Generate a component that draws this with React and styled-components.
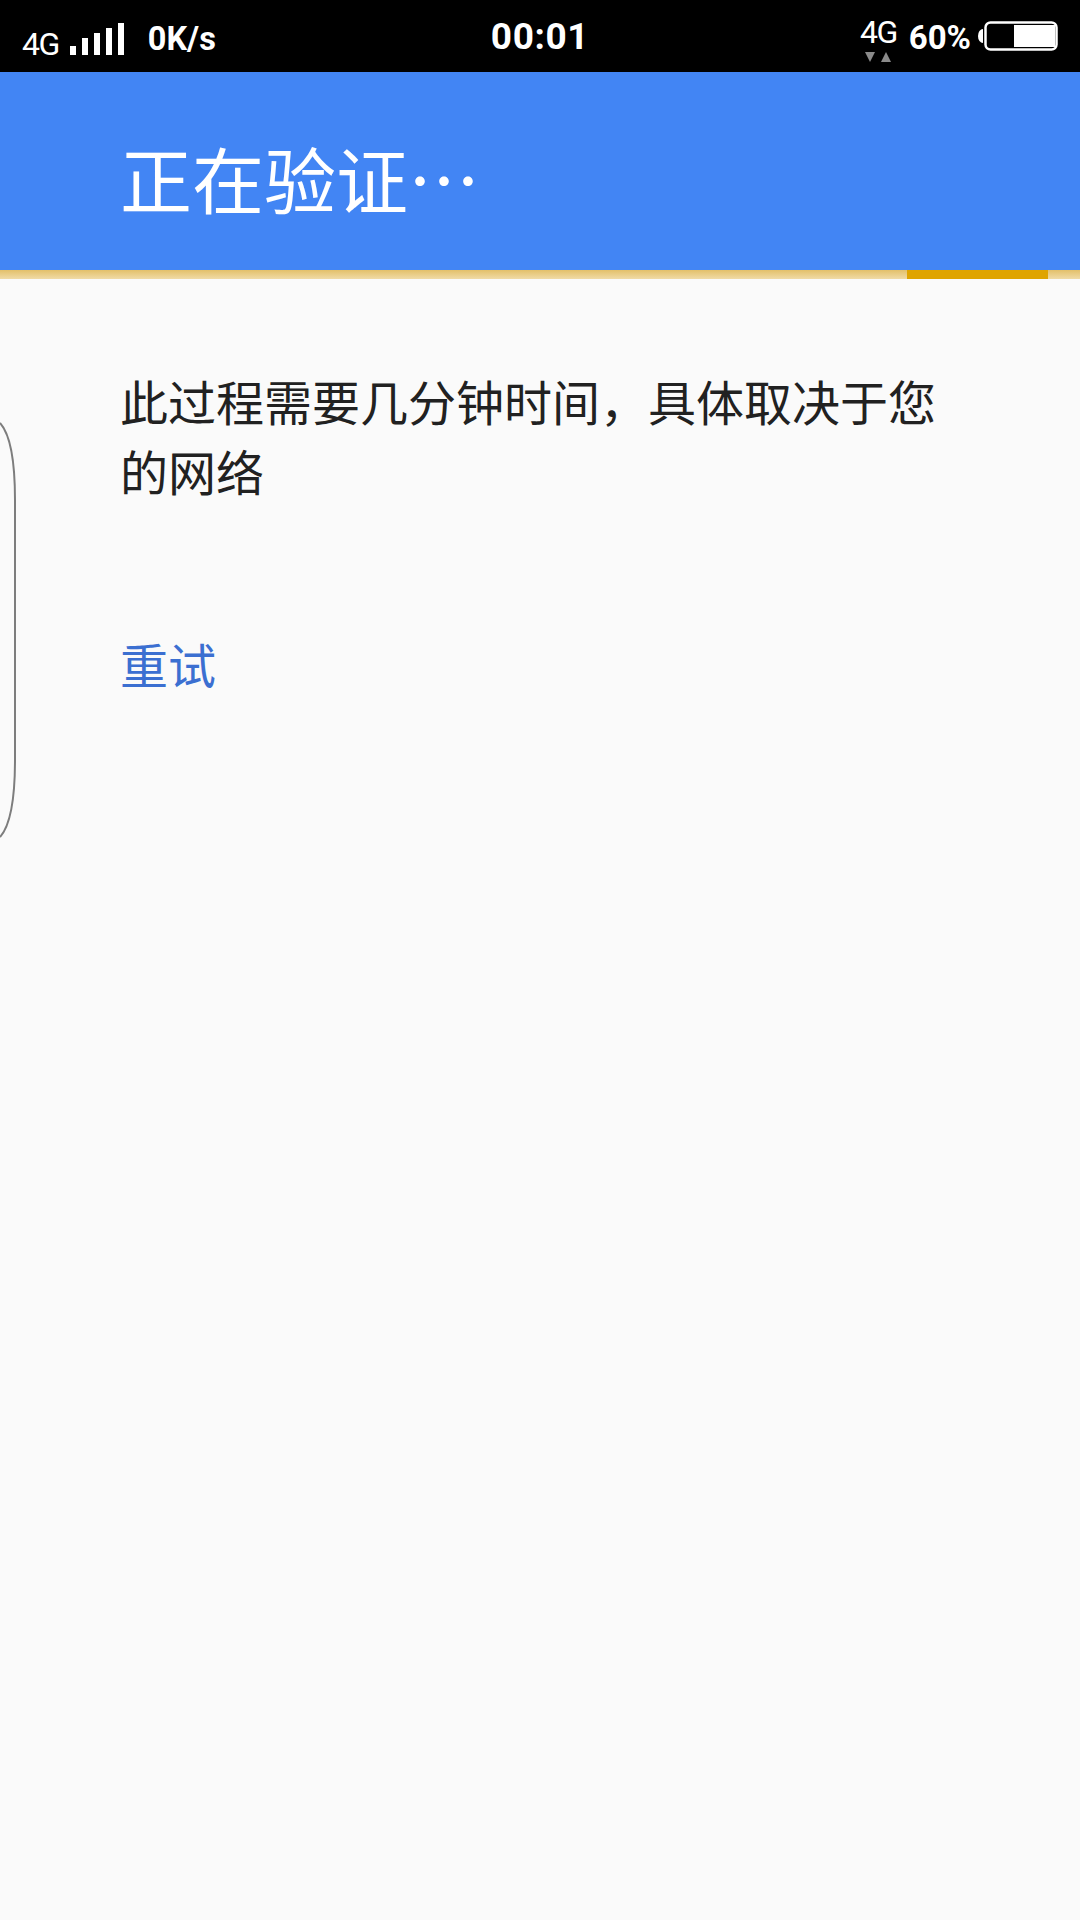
import React from "react";
import styled, { createGlobalStyle } from "styled-components";

const GlobalStyle = createGlobalStyle`
	html, body {
		margin: 0;
		padding: 0;
		background: #fafafa;
	}
	* {
		box-sizing: border-box;
	}
`;

const Page = styled.div`
	position: relative;
	width: 1080px;
	height: 1920px;
	overflow: hidden;
	background: #fafafa;
	font-family: "Noto Sans CJK SC", "Noto Sans", sans-serif;
`;

const StatusBar = styled.div`
	height: 72px;
	background: #000;
	color: #fff;
	display: grid;
	grid-template-columns: 1fr auto 1fr;
	align-items: center;
	font-family: Roboto, "Liberation Sans", sans-serif;
`;

const StatusLeft = styled.div`
	display: flex;
	align-items: center;
	padding-left: 22px;
`;

const StatusRight = styled.div`
	display: flex;
	align-items: center;
	justify-content: flex-end;
	padding-right: 22px;
`;

const NetworkLabel = styled.span`
	font-size: 32px;
	font-weight: 400;
	letter-spacing: -1.5px;
	line-height: 1;
	margin-top: ${(props) => props.$offset || 0}px;
`;

const Speed = styled.span`
	font-size: 32.5px;
	font-weight: 700;
	margin-left: 23px;
	margin-top: 5px;
`;

const Clock = styled.span`
	font-size: 37px;
	font-weight: 700;
	letter-spacing: 0.6px;
`;

const Percent = styled.span`
	font-size: 33px;
	font-weight: 700;
	margin-left: 12px;
	margin-right: 7px;
	margin-top: 3px;
`;

const DataStack = styled.div`
	display: flex;
	flex-direction: column;
	align-items: center;
	gap: 4px;
	margin-top: 6px;
`;

const Header = styled.header`
	height: 198px;
	background: #4285f4;
	padding: 62px 0 0 120px;
`;

const Title = styled.h1`
	margin: 0;
	color: #fff;
	font-size: 72px;
	font-weight: 400;
	line-height: 86px;
`;

const Progress = styled.div`
	height: 9px;
	background: linear-gradient(#e3c06a, #f0dba6);
	display: flex;
	justify-content: flex-end;
	padding-right: 32px;
`;

const ProgressFill = styled.div`
	width: 141px;
	background: #dfa400;
`;

const Content = styled.main`
	padding: 86px 130px 0 120px;
`;

const Message = styled.p`
	margin: 0;
	color: #212121;
	font-size: 48px;
	line-height: 70px;
`;

const RetryLink = styled.a`
	display: block;
	margin-top: 123px;
	color: #3b6fd1;
	font-size: 48px;
	line-height: 70px;
`;

const EdgeHandle = styled.svg`
	position: absolute;
	left: 0;
	top: 420px;
`;

const SignalBars = () => (
	<svg width="56" height="34" viewBox="0 0 56 34" style={{ marginLeft: 10, marginTop: 6 }}>
		<rect x="1" y="24" width="6" height="9" fill="#fff" />
		<rect x="13" y="16" width="6" height="17" fill="#fff" />
		<rect x="25" y="11" width="6" height="22" fill="#fff" />
		<rect x="37" y="6" width="6" height="27" fill="#fff" />
		<rect x="49" y="1" width="6" height="32" fill="#fff" />
	</svg>
);

const DataArrows = () => (
	<svg width="26" height="10" viewBox="0 0 26 10">
		<polygon points="0,0 10,0 5,10" fill="#8a8a8a" />
		<polygon points="16,10 26,10 21,0" fill="#8a8a8a" />
	</svg>
);

const Battery = () => (
	<svg width="80" height="30" viewBox="0 0 80 30">
		<path d="M5 8 A5 7 0 0 0 5 22 Z" fill="#fff" />
		<rect x="7.5" y="1.5" width="71" height="27" rx="5" fill="none" stroke="#fff" strokeWidth="2.5" />
		<rect x="36" y="4" width="41" height="22" fill="#fff" />
	</svg>
);

const App = () => {
	return (
		<Page>
			<GlobalStyle />
			<StatusBar>
				<StatusLeft>
					<NetworkLabel $offset={16}>4G</NetworkLabel>
					<SignalBars />
					<Speed>0K/s</Speed>
				</StatusLeft>
				<Clock>00:01</Clock>
				<StatusRight>
					<DataStack>
						<NetworkLabel>4G</NetworkLabel>
						<DataArrows />
					</DataStack>
					<Percent>60%</Percent>
					<Battery />
				</StatusRight>
			</StatusBar>
			<Header>
				<Title>正在验证…</Title>
			</Header>
			<Progress>
				<ProgressFill />
			</Progress>
			<Content>
				<Message>此过程需要几分钟时间，具体取决于您的网络</Message>
				<RetryLink>重试</RetryLink>
			</Content>
			<EdgeHandle width="18" height="424" viewBox="0 0 18 424">
				<path
					d="M0 3 C10 14 15 40 15 80 L15 340 C15 380 10 406 0 417"
					fill="none"
					stroke="#7d7d7d"
					strokeWidth="2"
				/>
			</EdgeHandle>
		</Page>
	);
};

export default App;
